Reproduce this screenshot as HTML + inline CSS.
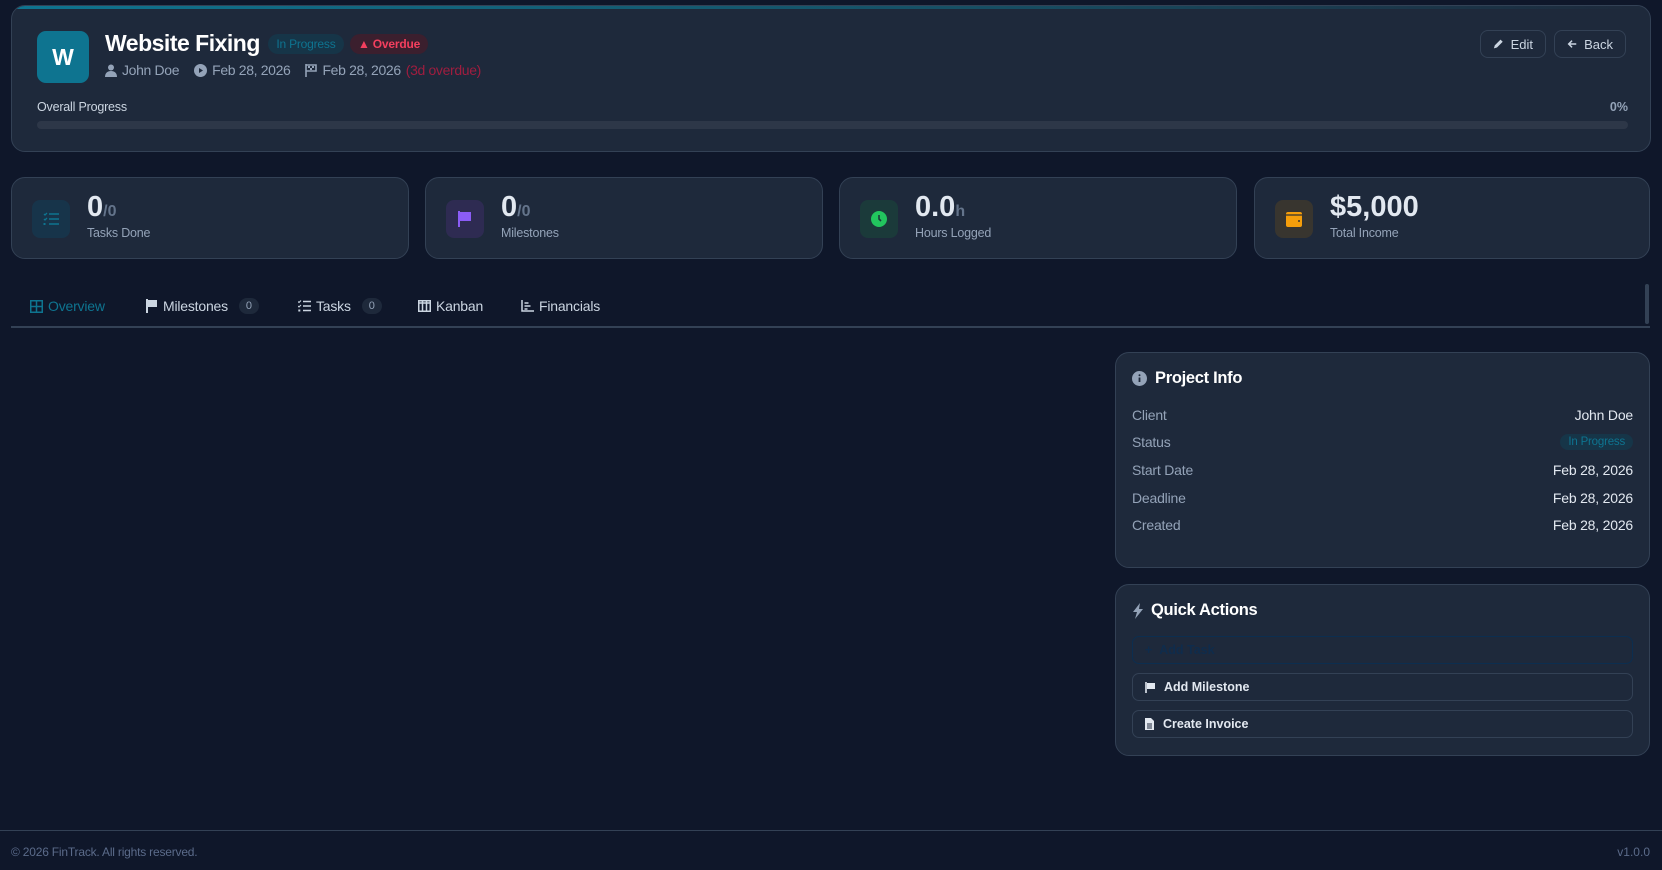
<!DOCTYPE html>
<html><head><meta charset="utf-8"><style>
*{box-sizing:border-box;margin:0;padding:0}
body{width:1662px;height:870px;background:#0f172a;font-family:"Liberation Sans",sans-serif;color:#e2e8f0;position:relative;overflow:hidden}
.abs{position:absolute}
.card{position:absolute;background:#1e293b;border:1px solid #334155;border-radius:14px}
.muted{color:#94a3b8}
.badge{display:inline-block;border-radius:10px;font-size:12px;padding:3px 8px;vertical-align:middle}
.btn{position:absolute;top:30px;height:28px;border:1px solid #334155;border-radius:8px;font-size:13px;color:#cbd5e1;display:flex;align-items:center;gap:7px;padding:0 12px}
.stat .ic{position:absolute;left:20px;top:22px;width:38px;height:38px;border-radius:8px;display:flex;align-items:center;justify-content:center}
.stat .v{position:absolute;left:75px;top:13px;font-size:29px;font-weight:bold;color:#e2e8f0}
.stat .v small{font-size:16px;color:#64748b}
.stat .l{position:absolute;left:75px;top:48px;font-size:12.5px;color:#94a3b8;letter-spacing:-0.2px}
.tab{position:absolute;top:298px;font-size:14px;color:#cbd5e1;display:flex;align-items:center;gap:5px;letter-spacing:-0.2px}
.cnt{background:#1e293b;border-radius:9px;font-size:11px;padding:2px 7px;margin-left:6px;color:#94a3b8}
.row{position:absolute;left:16px;right:16px;font-size:14px;display:flex;justify-content:space-between;letter-spacing:-0.2px}
.row span:first-child{color:#94a3b8}
.qa{position:absolute;left:16px;right:16px;height:28px;border:1px solid #334155;border-radius:7px;font-size:12.5px;font-weight:bold;color:#e2e8f0;display:flex;align-items:center;gap:9px;padding-left:12px}
</style></head><body>

<div class="card" style="left:11px;top:5px;width:1640px;height:147px;overflow:hidden">
  <div class="abs" style="left:0;top:0;width:100%;height:3px;background:linear-gradient(90deg,#0e7490,#164e63 60%,#1e293b)"></div>
  <div class="abs" style="left:25px;top:25px;width:52px;height:52px;border-radius:9px;background:#0e7490;color:#fff;font-weight:bold;font-size:23px;display:flex;align-items:center;justify-content:center">W</div>
  <div class="abs" style="left:93px;top:24px;white-space:nowrap">
    <span style="font-size:23px;font-weight:bold;color:#fff;vertical-align:middle;letter-spacing:-0.5px">Website Fixing</span>
    <span class="badge" style="background:#163548;color:#0e7490;margin-left:4px;letter-spacing:-0.2px">In Progress</span>
    <span class="badge" style="background:#3b1f2e;color:#f43f5e;margin-left:2px;font-weight:bold;letter-spacing:-0.2px">&#9650; Overdue</span>
  </div>
  <div class="abs muted" style="left:93px;top:56px;font-size:14px;white-space:nowrap;display:flex;align-items:center;gap:5px;letter-spacing:-0.35px">
    <svg width="12" height="13" viewBox="0 0 12 13"><circle cx="6" cy="3.5" r="3" fill="#94a3b8"/><path d="M0 13c0-4 2.5-6 6-6s6 2 6 6z" fill="#94a3b8"/></svg>John Doe
    <svg style="margin-left:10px" width="13" height="13" viewBox="0 0 13 13"><circle cx="6.5" cy="6.5" r="6.5" fill="#94a3b8"/><path d="M5 4l4 2.5L5 9z" fill="#1e293b"/></svg>Feb 28, 2026
    <svg style="margin-left:10px" width="12" height="13" viewBox="0 0 12 13"><path d="M1 0v13M1 1h10v6H1" stroke="#94a3b8" stroke-width="1.6" fill="none"/><path d="M3 2h2v2H3zM7 2h2v2H7zM5 4h2v2H5z" fill="#94a3b8"/></svg>Feb 28, 2026 <span style="color:#9f1d3f">(3d overdue)</span>
  </div>
  <div class="abs muted" style="left:25px;top:94px;font-size:12.5px;color:#cbd5e1;letter-spacing:-0.2px">Overall Progress</div>
  <div class="abs" style="right:22px;top:94px;font-size:12.5px;font-weight:bold;color:#94a3b8">0%</div>
  <div class="abs" style="left:25px;top:115px;width:1591px;height:8px;border-radius:4px;background:#2d3748"></div>
</div>
<div class="btn" style="left:1480px;width:66px"><svg width="12" height="12" viewBox="0 0 12 12"><path d="M1 11l1-3.5L8.5 1l2.5 2.5L4.5 10z" fill="#cbd5e1"/></svg>Edit</div>
<div class="btn" style="left:1554px;width:72px"><svg width="12" height="12" viewBox="0 0 12 12"><path d="M11 6H2M6 2L2 6l4 4" stroke="#cbd5e1" stroke-width="1.8" fill="none"/></svg>Back</div>

<div class="card stat" style="left:11px;top:177px;width:398px;height:82px">
  <div class="ic" style="background:#17344a"><svg width="16" height="14" viewBox="0 0 16 14"><path d="M1 2l1 1 2-2M1 7l1 1 2-2" stroke="#0e7490" stroke-width="1.3" fill="none"/><rect x="0.5" y="11" width="2" height="2" fill="#0e7490"/><path d="M6 2h10M6 7h10M6 12h10" stroke="#0e7490" stroke-width="1.6"/></svg></div>
  <div class="v">0<small>/0</small></div><div class="l">Tasks Done</div>
</div>
<div class="card stat" style="left:425px;top:177px;width:398px;height:82px">
  <div class="ic" style="background:#2e2b52"><svg width="14" height="16" viewBox="0 0 14 16"><path d="M1 0v16" stroke="#8b5cf6" stroke-width="2"/><path d="M2 1h11v9H2z" fill="#8b5cf6"/></svg></div>
  <div class="v">0<small>/0</small></div><div class="l">Milestones</div>
</div>
<div class="card stat" style="left:839px;top:177px;width:398px;height:82px">
  <div class="ic" style="background:#1b3a3a"><svg width="16" height="16" viewBox="0 0 16 16"><circle cx="8" cy="8" r="8" fill="#22c55e"/><path d="M8 4v4l2 2" stroke="#1b3a3a" stroke-width="1.6" fill="none"/></svg></div>
  <div class="v">0.0<small>h</small></div><div class="l">Hours Logged</div>
</div>
<div class="card stat" style="left:1254px;top:177px;width:396px;height:82px">
  <div class="ic" style="background:#38352f"><svg width="16" height="15" viewBox="0 0 16 15"><rect x="0" y="0" width="16" height="15" rx="2" fill="#f59e0b"/><path d="M0 3h16" stroke="#38352f" stroke-width="1.3"/><circle cx="13" cy="9" r="1" fill="#38352f"/></svg></div>
  <div class="v">$5,000</div><div class="l">Total Income</div>
</div>

<div class="tab" style="left:30px;color:#0e7490"><svg width="13" height="13" viewBox="0 0 13 13"><rect x="0.75" y="0.75" width="11.5" height="11.5" stroke="#0e7490" stroke-width="1.5" fill="none"/><path d="M6.5 0v13M0 6.5h13" stroke="#0e7490" stroke-width="1.5"/></svg>Overview</div>
<div class="tab" style="left:146px"><svg width="12" height="14" viewBox="0 0 12 14"><path d="M1 0v14" stroke="#cbd5e1" stroke-width="2"/><path d="M2 1h9v7H2z" fill="#cbd5e1"/></svg>Milestones<span class="cnt">0</span></div>
<div class="tab" style="left:298px"><svg width="13" height="12" viewBox="0 0 13 12"><path d="M0 1.5l1 1 2-2M0 6l1 1 2-2" stroke="#cbd5e1" stroke-width="1.1" fill="none"/><rect x="0.3" y="9.5" width="2" height="2" fill="#cbd5e1"/><path d="M5 1.5h8M5 6h8M5 10.5h8" stroke="#cbd5e1" stroke-width="1.5"/></svg>Tasks<span class="cnt">0</span></div>
<div class="tab" style="left:418px"><svg width="13" height="12" viewBox="0 0 13 12"><rect x="0.75" y="0.75" width="11.5" height="10.5" stroke="#cbd5e1" stroke-width="1.5" fill="none"/><path d="M0 3h13M4.5 1v10M8.5 1v10" stroke="#cbd5e1" stroke-width="1.5"/></svg>Kanban</div>
<div class="tab" style="left:521px"><svg width="13" height="12" viewBox="0 0 13 12"><path d="M1 0v11h12" stroke="#cbd5e1" stroke-width="1.5" fill="none"/><path d="M3.5 3h4M3.5 6h6M3.5 9h3" stroke="#cbd5e1" stroke-width="1.5"/></svg>Financials</div>
<div class="abs" style="left:11px;top:326px;width:1639px;height:2px;background:#334155"></div>
<div class="abs" style="left:1645px;top:284px;width:4px;height:40px;border-radius:2px;background:#334155"></div>

<div class="card" style="left:1115px;top:352px;width:535px;height:216px">
  <div class="abs" style="left:16px;top:16px;display:flex;align-items:center;gap:8px;font-size:16.5px;font-weight:bold;color:#fff;letter-spacing:-0.3px"><svg width="15" height="15" viewBox="0 0 15 15"><circle cx="7.5" cy="7.5" r="7.5" fill="#94a3b8"/><path d="M7.5 6.5v4.5" stroke="#1e293b" stroke-width="1.8"/><circle cx="7.5" cy="4.2" r="1" fill="#1e293b"/></svg>Project Info</div>
  <div class="row" style="top:54px"><span>Client</span><span>John Doe</span></div>
  <div class="row" style="top:81px"><span>Status</span><span style="background:#163548;color:#0e7490;font-size:11.5px;border-radius:9px;padding:2px 8px">In Progress</span></div>
  <div class="row" style="top:109px"><span>Start Date</span><span>Feb 28, 2026</span></div>
  <div class="row" style="top:137px"><span>Deadline</span><span>Feb 28, 2026</span></div>
  <div class="row" style="top:164px"><span>Created</span><span>Feb 28, 2026</span></div>
</div>

<div class="card" style="left:1115px;top:584px;width:535px;height:172px">
  <div class="abs" style="left:16px;top:16px;display:flex;align-items:center;gap:7px;font-size:16.5px;font-weight:bold;color:#fff;letter-spacing:-0.3px"><svg width="12" height="16" viewBox="0 0 12 16"><path d="M8 0L1 9h4l-2 7 8-10H7z" fill="#94a3b8"/></svg>Quick Actions</div>
  <div class="qa" style="top:51px;border-color:#0c2e50;color:#0f2c4c">+ &nbsp;Add Task</div>
  <div class="qa" style="top:88px"><svg width="10" height="11" viewBox="0 0 10 11"><path d="M1 0v11" stroke="#e2e8f0" stroke-width="1.6"/><path d="M2 1h8v6H2z" fill="#e2e8f0"/></svg>Add Milestone</div>
  <div class="qa" style="top:125px"><svg width="9" height="12" viewBox="0 0 9 12"><path d="M0 0h6l3 3v9H0z" fill="#e2e8f0"/><path d="M2 6h5M2 8h5M2 10h5" stroke="#1e293b" stroke-width="1"/></svg>Create Invoice</div>
</div>

<div class="abs" style="left:0;top:830px;width:1662px;height:1px;background:#334155"></div>
<div class="abs" style="left:11px;top:845px;font-size:12px;color:#5b6b8a;letter-spacing:-0.2px">© 2026 FinTrack. All rights reserved.</div>
<div class="abs" style="right:12px;top:845px;font-size:12px;color:#5b6b8a">v1.0.0</div>
</body></html>
